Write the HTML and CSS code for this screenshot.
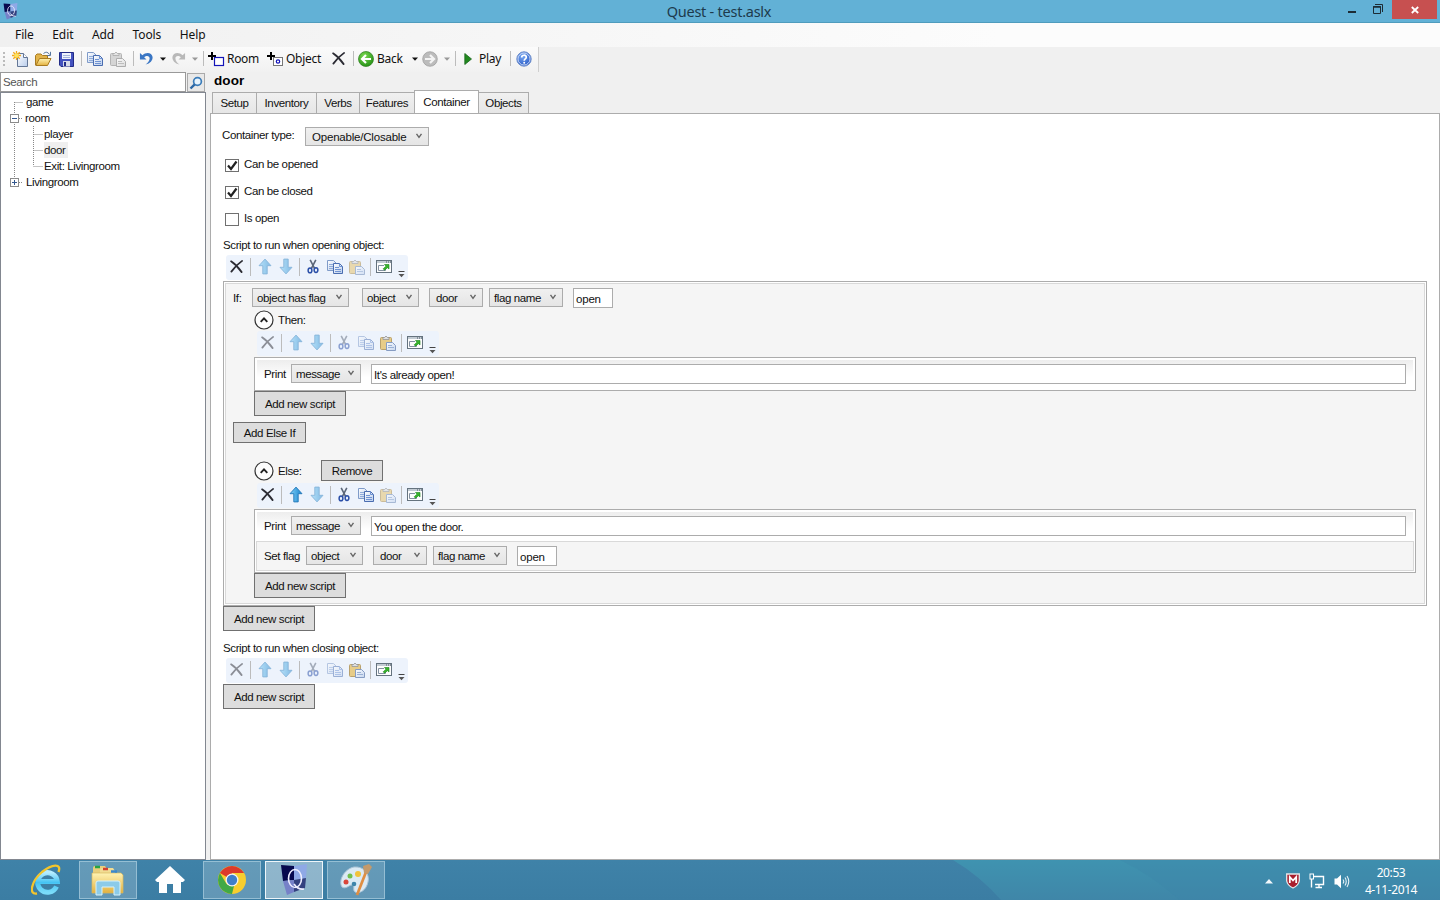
FILE: index.html
```html
<!DOCTYPE html>
<html lang="en">
<head>
  <meta charset="UTF-8">
  <title>Quest - test.aslx</title>
  <link rel="stylesheet" href="styles.css">
</head>
<body>
  <!-- shared icons -->
  <svg class="defs" width="0" height="0">
    <defs>
      <linearGradient id="gBlue" x1="0" y1="0" x2="1" y2="0"><stop offset="0" stop-color="#7fd0f8"/><stop offset="1" stop-color="#1a83cc"/></linearGradient>
      <linearGradient id="gFolder" x1="0" y1="0" x2="0" y2="1"><stop offset="0" stop-color="#fff3b4"/><stop offset="1" stop-color="#e3b13f"/></linearGradient>
      <linearGradient id="gPage" x1="0" y1="0" x2="1" y2="1"><stop offset="0" stop-color="#fff"/><stop offset="1" stop-color="#b9cdec"/></linearGradient>
      <radialGradient id="gGreen" cx=".4" cy=".3" r=".8"><stop offset="0" stop-color="#7bd950"/><stop offset="1" stop-color="#1c8a10"/></radialGradient>
      <radialGradient id="gHelp" cx=".4" cy=".3" r=".8"><stop offset="0" stop-color="#7aa9f2"/><stop offset="1" stop-color="#1c4fc0"/></radialGradient>
      <linearGradient id="gIE" x1="0" y1="0" x2="0" y2="1"><stop offset="0" stop-color="#b5ecff"/><stop offset=".5" stop-color="#46c3f3"/><stop offset="1" stop-color="#7adcfa"/></linearGradient>
    </defs>
    <symbol id="del" viewBox="0 0 16 16"><path d="M2.2 2.5C6 5 10 9 13.5 14M14 2C9.5 5 5.500 9.500 2.500 13.500" fill="none" stroke="#2b2b33" stroke-width="1.9" stroke-linecap="round"/></symbol>
    <symbol id="up" viewBox="0 0 16 16"><path d="M8 .6L14 7.200H10.200V15.400H5.800V7.200H2z" fill="url(#gBlue)" stroke="#2277b8" stroke-width=".9" stroke-linejoin="round"/></symbol>
    <symbol id="down" viewBox="0 0 16 16"><path d="M8 15.400L14 8.800H10.200V.6H5.800V8.800H2z" fill="url(#gBlue)" stroke="#2277b8" stroke-width=".9" stroke-linejoin="round"/></symbol>
    <symbol id="cut" viewBox="0 0 14 16"><path d="M4 1L8.800 10.200M10 1L5.200 10.200" stroke="#5b6678" stroke-width="1.700" fill="none"/><ellipse cx="3.800" cy="12.200" rx="2" ry="2.500" fill="none" stroke="#2a4fa8" stroke-width="1.600"/><ellipse cx="10.200" cy="11.800" rx="2" ry="2.500" fill="none" stroke="#2a4fa8" stroke-width="1.600"/></symbol>
    <symbol id="copy" viewBox="0 0 16 16"><path d="M.5 1.500H6.500L9.500 4.500V11.500H.5z" fill="url(#gPage)" stroke="#7f9bc9"/><path d="M2 5.500H6M2 7.500H6M2 9.500H6" stroke="#8fabd9"/><path d="M6.500 4.500H12.500L15.500 7.500V14.500H6.500z" fill="url(#gPage)" stroke="#4a6db0"/><path d="M12.500 4.500V7.500H15.500M8 8.500H12M8 10.500H14M8 12.500H14" stroke="#6f93d3" fill="none"/></symbol>
    <symbol id="paste" viewBox="0 0 16 16"><rect x=".5" y="2.500" width="11" height="12" rx="1" fill="#e5bf62" stroke="#a8863c"/><path d="M3 4.500V2.500H4.500Q6 -.5 7.500 2.500H9V4.500z" fill="#d9d9d9" stroke="#777" stroke-width=".8"/><path d="M6.500 7.500H12.500L15.500 10.500V15.500H6.500z" fill="url(#gPage)" stroke="#6480b0"/><path d="M8 10.500H12M8 12.500H14" stroke="#7f9cc9"/></symbol>
    <symbol id="popup" viewBox="0 0 16 16"><rect x=".5" y="1.500" width="15" height="12" fill="#fdfdfd" stroke="#65737f"/><path d="M1 3H15" stroke="#c3ccd4" stroke-width="2"/><path d="M10 3H15" stroke="#46535e" stroke-dasharray="1 1"/><path d="M8 6.500H2.500V11.500H9.500V10" fill="none" stroke="#8290a0"/><path d="M8.500 5.500H13V10L11.500 8.700L8.500 11.200L7.200 9.800L10 7.200z" fill="#39b52b" stroke="#17841a" stroke-width=".6"/></symbol>
    <symbol id="caret" viewBox="0 0 6 4"><path d="M0 .5H6L3 3.700z" fill="currentColor"/></symbol>
    <symbol id="chev" viewBox="0 0 8 6"><path d="M1.500 .8L4 4.300L6.500 .8" fill="none" stroke="#666" stroke-width="1.400"/></symbol>
    <symbol id="more" viewBox="0 0 7 7"><path d="M.5 .5H6.500" stroke="#444"/><path d="M.5 3H6.500L3.500 6.300z" fill="#555"/></symbol>
    <symbol id="fold" viewBox="0 0 20 20"><circle cx="10" cy="10" r="9" fill="#fdfdfd" stroke="#333" stroke-width="1.200"/><path d="M6.700 11.800L10 8.300L13.300 11.800" fill="none" stroke="#222" stroke-width="1.900"/></symbol>
    <symbol id="undo" viewBox="0 0 16 16"><path d="M1 2V9H8L5.500 6.700C8 4.200 11.500 5 11.300 8C11.200 10.500 9.500 12.500 7 14.500C12 13.500 14.700 10 14.500 6.500C14 1.500 7.500 .5 3.700 4.500z" fill="currentColor"/></symbol>
    <symbol id="quest" viewBox="0 0 28 32"><path d="M1 1L14 2L14 16L3 17z" fill="#07094e"/><path d="M14 2L27 0L26 14L14 16z" fill="#8fa9e6"/><path d="M3 17L14 16V28L7 31z" fill="#7681c8"/><path d="M14 16L26 14L25 24L14 28z" fill="#34417f"/><ellipse cx="15" cy="14.500" rx="6.500" ry="9" fill="none" stroke="#eef" stroke-width="1.600"/><path d="M14 20Q18 26 24 25" fill="none" stroke="#eef" stroke-width="1.600"/></symbol>
  </svg>

  <header class="titlebar">
    <svg class="app-icon" width="15" height="17"><use href="#quest"/></svg>
    <h1>Quest - test.aslx</h1>
    <div class="win-buttons">
      <svg width="60" height="19"><path d="M4 12H12" stroke="#1d2c35" stroke-width="2"/><path d="M29.500 6.500H36.500V13.500H29.500z" fill="none" stroke="#1d2c35"/><path d="M29 7H37" stroke="#1d2c35" stroke-width="1.500"/><path d="M31 4.500H38.500V12" fill="none" stroke="#1d2c35"/></svg>
      <span class="close"><svg width="8" height="8"><path d="M.8 1L7.200 7M7.200 1L.8 7" stroke="#fff" stroke-width="1.800"/></svg></span>
    </div>
  </header>

  <nav class="menubar"><span>File</span><span>Edit</span><span>Add</span><span>Tools</span><span>Help</span></nav>

  <div class="toolbar">
    <i class="grip"></i>
    <svg width="16" height="16"><path d="M5.500 2.500H11.500L15.500 6.500V15.500H5.500z" fill="url(#gPage)" stroke="#647796"/><path d="M11.500 2.500V6.500H15.500" fill="#fff" stroke="#647796"/><path d="M4.500 0V9M0 4.500H9M1.300 1.300L7.700 7.700M7.700 1.300L1.300 7.700" stroke="#f2a71b" stroke-width="1.300"/><circle cx="4.500" cy="4.500" r="2.200" fill="#ffe25a"/></svg>
    <svg width="17" height="16"><path d="M.5 14V4.500L2 3H6L7.500 4.500H12.500V8" fill="#e2b44b" stroke="#a87b21"/><path d="M.8 14.500L4.500 7.500H16L12.500 14.500z" fill="url(#gFolder)" stroke="#a87b21"/><path d="M8.500 2.500Q12 -.5 14.500 3.500M15.500 .8V4.500H12" fill="none" stroke="#56779f"/></svg>
    <svg width="15" height="16"><path d="M.5 1.500H14.500V15.500H2L.5 14z" fill="#4452bf" stroke="#222c87"/><rect x="3" y="2" width="9" height="6" fill="#eef2fc"/><path d="M4 4.500H11M4 6.500H11" stroke="#a3b3dc"/><rect x="4" y="10" width="7" height="5.500" fill="#d8dcea"/><rect x="5" y="11" width="2" height="4" fill="#222c87"/></svg>
    <i class="sep"></i>
    <svg width="16" height="16"><use href="#copy"/></svg>
    <svg class="gray" width="16" height="16"><use href="#paste"/></svg>
    <i class="sep"></i>
    <svg class="undo" width="15" height="15"><use href="#undo"/></svg>
    <svg width="6" height="4"><use href="#caret"/></svg>
    <svg class="redo" width="15" height="15"><use href="#undo"/></svg>
    <svg class="off" width="6" height="4"><use href="#caret"/></svg>
    <i class="sep"></i>
    <svg width="17" height="16"><path d="M4 1V9M0 5H8" stroke="#000" stroke-width="2"/><rect x="6.500" y="6.500" width="9" height="8" fill="#fff" stroke="#1414b8" stroke-width="1.200"/></svg>
    <span>Room</span>
    <svg width="17" height="16"><path d="M4 1V9M0 5H8" stroke="#000" stroke-width="2"/><rect x="6.500" y="6.500" width="9" height="8" fill="#fff" stroke="#777"/><circle cx="11" cy="10.500" r="1.700" fill="none" stroke="#1414b8" stroke-width="1.200"/></svg>
    <span>Object</span>
    <svg width="15" height="15"><use href="#del"/></svg>
    <i class="sep"></i>
    <svg width="16" height="16"><circle cx="8" cy="8" r="7.500" fill="url(#gGreen)" stroke="#2c7d1c" stroke-width=".7"/><path d="M13 8H4.500M8 4L4 8L8 12" fill="none" stroke="#fff" stroke-width="2.200"/></svg>
    <span>Back</span>
    <svg width="6" height="4"><use href="#caret"/></svg>
    <svg width="16" height="16"><circle cx="8" cy="8" r="7.300" fill="#bcbcbc" stroke="#999" stroke-width=".7"/><path d="M3 8H11.500M8 4L12 8L8 12" fill="none" stroke="#f4f4f4" stroke-width="2.200"/></svg>
    <svg class="off" width="6" height="4"><use href="#caret"/></svg>
    <i class="sep"></i>
    <svg width="8" height="12"><path d="M.8 .5L7.500 6L.8 11.500z" fill="#22891f" stroke="#17641a" stroke-width=".8"/></svg>
    <span>Play</span>
    <i class="sep"></i>
    <svg width="16" height="16"><circle cx="8" cy="8" r="7.200" fill="url(#gHelp)" stroke="#6f8fca"/><circle cx="8" cy="8" r="6" fill="none" stroke="#dfe9fb" stroke-width=".8"/><path d="M5.700 6.500C5.700 3.500 10.500 3.500 10.300 6.300C10.200 8 8.200 8 8.200 9.800" fill="none" stroke="#fff" stroke-width="1.700"/><circle cx="8.200" cy="11.800" r="1" fill="#fff"/></svg>
  </div>

  <main class="workspace">
    <aside class="sidebar">
      <div class="search">
        <input type="text" placeholder="Search">
        <button class="search-btn"><svg width="14" height="14"><circle cx="8.500" cy="5.500" r="3.900" fill="#e8f4fd" stroke="#3b7cb9" stroke-width="1.700"/><path d="M5.700 8.300L1.500 12.500" stroke="#2c68a6" stroke-width="2.400"/></svg></button>
      </div>
      <div class="tree">
        <div class="node"><svg width="25" height="16"><path class="dots" d="M13.500 8V16M13.500 8.500H22"/></svg><span>game</span></div>
        <div class="node"><svg width="24" height="16"><path class="dots" d="M13.500 0V16M18 8.500H22"/><rect class="box" x="9.500" y="4.500" width="8" height="8"/><path class="sign" d="M11 8.500H16"/></svg><span>room</span></div>
        <div class="node"><svg width="43" height="16"><path class="dots" d="M13.500 0V16M32.500 0V16M32.500 8.500H42"/></svg><span>player</span></div>
        <div class="node"><svg width="43" height="16"><path class="dots" d="M13.500 0V16M32.500 0V16M32.500 8.500H42"/></svg><span class="selected">door</span></div>
        <div class="node"><svg width="43" height="16"><path class="dots" d="M13.500 0V16M32.500 0V8M32.500 8.500H42"/></svg><span>Exit: Livingroom</span></div>
        <div class="node"><svg width="25" height="16"><path class="dots" d="M13.500 0V5M18 8.500H22"/><rect class="box" x="9.500" y="4.500" width="8" height="8"/><path class="sign" d="M11 8.500H16M13.500 6V11"/></svg><span>Livingroom</span></div>
      </div>
    </aside>

    <section class="editor">
      <h2>door</h2>
      <div class="tabs">
        <span class="w44">Setup</span><span class="w60">Inventory</span><span class="w43">Verbs</span><span class="w55">Features</span><span class="active">Container</span><span class="w50">Objects</span>
      </div>
      <div class="panel">
        <div class="type-row"><label>Container type:</label><div class="select w124">Openable/Closable<svg width="8" height="6"><use href="#chev"/></svg></div></div>
        <div class="check"><i><svg width="12" height="12"><path d="M2 5.500L5 9L10.500 1.500" fill="none" stroke="#222" stroke-width="2.200"/></svg></i><label>Can be opened</label></div>
        <div class="check"><i><svg width="12" height="12"><path d="M2 5.500L5 9L10.500 1.500" fill="none" stroke="#222" stroke-width="2.200"/></svg></i><label>Can be closed</label></div>
        <div class="check"><i></i><label>Is open</label></div>

        <p class="caption">Script to run when opening object:</p>
        <div class="script-bar">
          <svg width="15" height="15"><use href="#del"/></svg><i class="sep"></i>
          <svg class="dim" width="16" height="17"><use href="#up"/></svg><svg class="dim" width="16" height="17"><use href="#down"/></svg><i class="sep"></i>
          <svg width="14" height="15"><use href="#cut"/></svg><svg width="16" height="16"><use href="#copy"/></svg><svg class="dim" width="16" height="16"><use href="#paste"/></svg><i class="sep"></i>
          <svg width="16" height="16"><use href="#popup"/></svg><svg class="more" width="7" height="7"><use href="#more"/></svg>
        </div>

        <div class="if-frame">
          <div class="if-block">
            <div class="fields">
              <label class="if-label">If:</label>
              <div class="select w97">object has flag<svg width="8" height="6"><use href="#chev"/></svg></div>
              <div class="select w57">object<svg width="8" height="6"><use href="#chev"/></svg></div>
              <div class="select w54">door<svg width="8" height="6"><use href="#chev"/></svg></div>
              <div class="select w74">flag name<svg width="8" height="6"><use href="#chev"/></svg></div>
              <input class="flag" type="text" value="open">
            </div>
            <div class="branch">
              <div class="branch-head"><svg width="20" height="20"><use href="#fold"/></svg><label>Then:</label></div>
              <div class="script-bar">
                <svg class="dim" width="15" height="15"><use href="#del"/></svg><i class="sep"></i>
                <svg class="dim" width="16" height="17"><use href="#up"/></svg><svg class="dim" width="16" height="17"><use href="#down"/></svg><i class="sep"></i>
                <svg class="dim" width="14" height="15"><use href="#cut"/></svg><svg class="dim" width="16" height="16"><use href="#copy"/></svg><svg class="soft" width="16" height="16"><use href="#paste"/></svg><i class="sep"></i>
                <svg width="16" height="16"><use href="#popup"/></svg><svg class="more" width="7" height="7"><use href="#more"/></svg>
              </div>
              <div class="script-list">
                <div class="print"><label>Print</label><div class="select w70">message<svg width="8" height="6"><use href="#chev"/></svg></div><input type="text" value="It's already open!"></div>
              </div>
              <button class="add">Add new script</button>
            </div>
            <button class="else-if">Add Else If</button>
            <div class="branch else">
              <div class="branch-head"><svg width="20" height="20"><use href="#fold"/></svg><label>Else:</label><button class="remove">Remove</button></div>
              <div class="script-bar">
                <svg width="15" height="15"><use href="#del"/></svg><i class="sep"></i>
                <svg width="16" height="17"><use href="#up"/></svg><svg class="dim" width="16" height="17"><use href="#down"/></svg><i class="sep"></i>
                <svg width="14" height="15"><use href="#cut"/></svg><svg width="16" height="16"><use href="#copy"/></svg><svg class="dim" width="16" height="16"><use href="#paste"/></svg><i class="sep"></i>
                <svg width="16" height="16"><use href="#popup"/></svg><svg class="more" width="7" height="7"><use href="#more"/></svg>
              </div>
              <div class="script-list">
                <div class="print"><label>Print</label><div class="select w70">message<svg width="8" height="6"><use href="#chev"/></svg></div><input type="text" value="You open the door."></div>
                <div class="fields set-flag">
                  <label>Set flag</label>
                  <div class="select w57">object<svg width="8" height="6"><use href="#chev"/></svg></div>
                  <div class="select w54">door<svg width="8" height="6"><use href="#chev"/></svg></div>
                  <div class="select w74">flag name<svg width="8" height="6"><use href="#chev"/></svg></div>
                  <input class="flag" type="text" value="open">
                </div>
              </div>
              <button class="add">Add new script</button>
            </div>
          </div>
        </div>
        <button class="add">Add new script</button>

        <p class="caption closing">Script to run when closing object:</p>
        <div class="script-bar">
          <svg class="dim" width="15" height="15"><use href="#del"/></svg><i class="sep"></i>
          <svg class="dim" width="16" height="17"><use href="#up"/></svg><svg class="dim" width="16" height="17"><use href="#down"/></svg><i class="sep"></i>
          <svg class="dim" width="14" height="15"><use href="#cut"/></svg><svg class="dim" width="16" height="16"><use href="#copy"/></svg><svg class="soft" width="16" height="16"><use href="#paste"/></svg><i class="sep"></i>
          <svg width="16" height="16"><use href="#popup"/></svg><svg class="more" width="7" height="7"><use href="#more"/></svg>
        </div>
        <button class="add last">Add new script</button>
      </div>
    </section>
  </main>

  <footer class="taskbar">
    <svg class="wave" width="500" height="40"><defs><linearGradient id="gWave" x1="0" y1="0" x2="0" y2="1"><stop offset="0" stop-color="#3f93b0"/><stop offset="1" stop-color="#3f86a8"/></linearGradient></defs><path d="M13 0Q40 16 61 40H500V0z" fill="url(#gWave)"/><path d="M180 0Q210 14 240 40H500V0z" fill="#3d86a8" opacity=".3"/></svg>
    <div class="apps">
      <span class="app"><svg width="30" height="32"><path d="M25.500 22.500A9.800 9.800 0 1 1 26.300 17.500H9" fill="none" stroke="url(#gIE)" stroke-width="5"/><path d="M6 29.500C-3 31 .5 17 11 8C21 0 31 -1 27.500 8" fill="none" stroke="#f3c52c" stroke-width="2.300"/></svg></span>
      <span class="app open"><svg width="34" height="32"><path d="M2 26V4Q2 2 4 2H14L16 5V26z" fill="#e8cf7d"/><path d="M9 27V6Q9 4 11 4H22L24 7V27z" fill="#f1dc92"/><path d="M1 29V9H30L32 11V29z" fill="url(#gFolder)" stroke="#d9b95e" stroke-width=".7"/><path d="M4 3H9" stroke="#26a343" stroke-width="2.500"/><path d="M12 5H17" stroke="#d33f2f" stroke-width="2.500"/><path d="M20 7.500H26" stroke="#3b88cc" stroke-width="2.500"/><path d="M5 31V19Q5 17 7 17H27Q29 17 29 19V31H23V23H11V31z" fill="#8ccbe9" stroke="#d6f2fc"/></svg></span>
      <span class="app"><svg width="30" height="28"><path d="M15 0L30 14L28 16H26V27H18V18H12V27H4V16H2L0 14z" fill="#fff"/></svg></span>
      <span class="app open"><svg width="30" height="30"><circle cx="15" cy="15" r="14" fill="#f8ce2e"/><path d="M15 15L2.900 8A14 14 0 0 1 27.100 8H15z" fill="#dc3a2b"/><path d="M15 29A14 14 0 0 1 2.900 8L9.500 19L17 21z" fill="#42a945"/><circle cx="15" cy="15" r="6.500" fill="#f4f4f4"/><circle cx="15" cy="15" r="5.200" fill="#3f7fca"/></svg></span>
      <span class="app open current"><svg width="28" height="32"><use href="#quest"/></svg></span>
      <span class="app open"><svg width="32" height="32"><path d="M14 3C24 2 30 10 28 18C26 27 19 30 15 28C12 26 16 21 11 21C7 23 5 25 2 23C-2 17 4 5 14 3z" fill="#dceaf4" stroke="#a9c3d6"/><circle cx="6" cy="18" r="2.500" fill="#d9453a"/><circle cx="10" cy="12" r="2.500" fill="#72bf4d"/><circle cx="18" cy="10" r="3" fill="#f1c33b"/><circle cx="14" cy="20" r="2.300" fill="#3e85ab"/><path d="M26 8L17 31" stroke="#df8e42" stroke-width="2.700"/><path d="M24 9L23 2L29 0L32 3L28 10z" fill="#c49a6b"/></svg></span>
    </div>
    <div class="tray">
      <svg width="8" height="5"><path d="M4 0L8 4.500H0z" fill="#f2f8fb"/></svg>
      <svg width="14" height="16"><path d="M.7 1H13.300V8Q12.500 12.500 7 15Q1.500 12.500 .7 8z" fill="#a91e2d" stroke="#e4e8ea" stroke-width="1.300"/><path d="M3.800 10V4L7 7.500L10.200 4V10" fill="none" stroke="#fff" stroke-width="1.800"/></svg>
      <svg width="16" height="16"><path d="M5 3.500H14.500V11.500H6M10 12V14.500M6.500 14.500H13M2.500 5V14.500" fill="none" stroke="#fff" stroke-width="1.400"/><rect x="1" y="1" width="3.500" height="5" fill="#3e88aa" stroke="#fff"/></svg>
      <svg width="16" height="15"><path d="M.5 4.500H3L7 .8V14.200L3 10.500H.5z" fill="#fff"/><path d="M9 5.500Q10.500 7.500 9 9.500M11 3.500Q13.500 7.500 11 11.500M13 2Q16.500 7.500 13 13" fill="none" stroke="#e6f1f6" stroke-width="1.100"/></svg>
      <div class="clock"><span class="time">20:53</span><span>4-11-2014</span></div>
    </div>
  </footer>
</body>
</html>
```
FILE: styles.css
```css
* {
  box-sizing: border-box;
}
body {
  margin: 0;
  width: 1440px;
  height: 900px;
  overflow: hidden;
  display: flex;
  flex-direction: column;
  background: #f0f0f0;
  color: #111;
  font-family: "Liberation Sans", Arial, sans-serif;
  font-size: 11.5px;
  letter-spacing: -0.38px;
}
svg {
  display: block;
  flex: none;
}
.defs {
  position: absolute;
}
h1, h2, p {
  margin: 0;
}
button, input {
  font: inherit;
  letter-spacing: inherit;
  color: inherit;
  border-radius: 0;
  margin: 0;
}

/* window chrome */
.titlebar {
  height: 23px;
  display: grid;
  grid-template-columns: 110px 1fr 110px;
  background: #62b1d6;
  border-bottom: 1px solid #4f9cbd;
}
.app-icon {
  margin: 3px 0 0 3px;
}
.titlebar h1 {
  text-align: center;
  font: 14.5px/23px "Noto Sans", sans-serif;
  letter-spacing: -0.25px;
  color: #1d3a4c;
  padding-right: 2px;
}
.win-buttons {
  display: flex;
  justify-content: flex-end;
  padding-right: 3px;
}
.win-buttons > svg {
  margin-right: -12px;
}
.close {
  width: 45px;
  height: 19px;
  background: #c75050;
  display: flex;
  align-items: center;
  justify-content: center;
}
.menubar {
  height: 24px;
  display: flex;
  gap: 18.500px;
  padding-left: 15px;
  background: linear-gradient(to right, #f0f0f0, #fcfcfc 1000px);
  font: 12px/24px "Noto Sans", sans-serif;
  letter-spacing: -0.1px;
}
.toolbar {
  height: 25px;
  width: 539px;
  display: grid;
  grid-template-columns: 12px 23px 24px 22px 6px 23px 23px 6px 21px 11px 21px 11px 5px 19px 40px 19px 45px 22px 5px 19px 35px 10px 22px 11px 9px 15px 31px 6px 16px;
  align-items: center;
  padding-bottom: 2px;
  background: linear-gradient(to bottom, #fbfbfb, #f1f1f1);
  border-right: 1px solid #cfcfcf;
  font: 12px/22px "Noto Sans", sans-serif;
  letter-spacing: -0.3px;
}
.grip {
  width: 2px;
  height: 14px;
  margin-left: 3px;
  background: repeating-linear-gradient(to bottom, #bbb 0 2px, transparent 2px 4px);
}
.sep {
  width: 1px;
  height: 15px;
  background: #bcbcbc;
}
.gray {
  filter: grayscale(1);
  opacity: 0.6;
}
.undo {
  color: #3a76c4;
}
.redo {
  color: #b9b9b9;
  transform: scaleX(-1);
}
.off {
  color: #999;
}

.workspace {
  height: 788px;
  display: flex;
}
.sidebar {
  width: 206px;
  display: flex;
  flex-direction: column;
  margin-right: 4px;
}
.search {
  height: 20px;
  display: flex;
  gap: 1px;
}
.search input {
  width: 186px;
  height: 20px;
  padding: 0 2px;
  border: 1px solid #999;
}
.search input::placeholder {
  color: #555;
}
.search-btn {
  width: 18px;
  height: 19px;
  padding: 1px;
  margin-top: 1px;
  background: #e8e8e8;
  border: 1px solid #aaa;
}
.tree {
  flex: 1;
  background: #fff;
  border: 1px solid #828790;
  padding-top: 1px;
}
.node {
  height: 16px;
  display: flex;
  line-height: 16px;
}
.node .selected {
  background: #efefef;
  padding-right: 2px;
}
.dots {
  stroke: #888;
  stroke-dasharray: 1 1;
  fill: none;
}
.box {
  fill: #fff;
  stroke: #8b8b8b;
}
.sign {
  stroke: #34588f;
}

/* object editor */
.editor {
  flex: 1;
  display: flex;
  flex-direction: column;
}
h2 {
  height: 18px;
  padding-left: 4px;
  font-size: 13.5px;
  line-height: 17px;
  letter-spacing: 0.1px;
  color: #000;
}
.tabs {
  height: 23px;
  display: flex;
  align-items: flex-end;
  padding-left: 2px;
}
.tabs span {
  height: 21px;
  border: 1px solid #acacac;
  border-bottom: 0;
  border-right: 0;
  background: linear-gradient(to bottom, #f0f0f0, #e6e6e6);
  text-align: center;
  line-height: 20px;
}
.tabs .active {
  width: 65px;
  height: 24px;
  margin-bottom: -1px;
  border-right: 1px solid #acacac;
  background: #fff;
  line-height: 22px;
}
.tabs span:last-child {
  border-right: 1px solid #acacac;
  border-left: 0;
}
.w43 { width: 43px; }
.w44 { width: 44px; }
.w50 { width: 50px; }
.w54 { width: 54px; }
.w55 { width: 55px; }
.w57 { width: 57px; }
.w60 { width: 60px; }
.w70 { width: 70px; }
.w74 { width: 74px; }
.w97 { width: 97px; }
.w124 { width: 124px; }
.panel {
  flex: 1;
  background: #fff;
  border: 1px solid #acacac;
  padding: 13px 12px 0;
}
.type-row {
  height: 27px;
  display: flex;
  align-items: flex-start;
}
.type-row label {
  width: 82px;
  line-height: 17px;
  margin-left: -1px;
  margin-right: 1px;
}
.select {
  height: 19px;
  display: flex;
  justify-content: space-between;
  padding: 0 5px 0 4px;
  border: 1px solid #acacac;
  background: linear-gradient(to bottom, #f0f0f0, #e5e5e5);
  line-height: 18px;
  white-space: nowrap;
}
.select svg {
  margin-top: 5px;
}
.select.w124 {
  padding-left: 6px;
  letter-spacing: -0.2px;
}
.check {
  height: 27px;
  display: flex;
  gap: 5px;
  padding-left: 2px;
}
.check i {
  width: 14px;
  height: 13px;
  margin-top: 5px;
  border: 1px solid #707070;
}
.check label {
  line-height: 21px;
}
.caption {
  height: 20px;
  line-height: 20px;
}
.script-bar {
  width: 182px;
  height: 25px;
  margin-left: 3px;
  padding-bottom: 2px;
  display: grid;
  grid-template-columns: 21px 7px 21px 21px 7px 20px 23px 22px 5px 22px 13px;
  align-items: center;
  justify-items: center;
  background: #edf3fc;
  border-radius: 3px;
}
.script-bar .sep {
  height: 18px;
}
.script-bar .more {
  margin-top: 15px;
}
.dim {
  opacity: 0.5;
}
.soft {
  opacity: 0.75;
}
.if-frame {
  width: 1204px;
  height: 325px;
  border: 1px solid #acacac;
  padding: 1px;
  margin-top: 1px;
}
.if-block {
  height: 321px;
  border: 1px solid #d9d9d9;
  background: #f5f5f5;
  padding: 4px 7px 0;
}
.fields {
  display: flex;
}
.fields label,
.print label {
  line-height: 20px;
  height: 19px;
}
.fields .if-label {
  width: 19px;
}
.fields .w57 {
  margin-right: 10px;
}
.fields .w54 {
  margin-right: 6px;
}
.fields .w97 {
  margin-right: 13px;
}
.fields .w54 {
  padding-left: 6px;
}
.fields .w74 {
  padding-left: 4px;
  margin-right: 10px;
}
.flag {
  width: 40px;
  height: 20px;
  padding: 1px 2px 0;
  border: 1px solid #acacac;
  letter-spacing: -0.2px;
}
.branch {
  margin-left: 21px;
}
.branch-head {
  height: 23px;
  display: flex;
  gap: 4px;
  padding-top: 2px;
}
.branch-head label {
  line-height: 20px;
}
.else .branch-head {
  padding-top: 1px;
}
.else .branch-head label {
  width: 23px;
}
.script-list {
  width: 1162px;
  margin-top: 1px;
  border: 1px solid #acacac;
  padding: 1px;
  background: #fff;
}
.print {
  height: 30px;
  display: flex;
  margin: 0 1px;
  padding: 4px 7px 0;
  border-top: 1px solid #fff;
  background: linear-gradient(to bottom, #ededed, #fff 60%);
}
.print label {
  width: 26px;
  margin-right: 1px;
}
.print .select {
  margin-right: 10px;
}
.print input {
  flex: 1;
  height: 20px;
  padding: 2px 2px 0;
  border: 1px solid #acacac;
  background: #fff;
}
.set-flag {
  height: 30px;
  padding: 4px 7px 0;
  border: 1px solid #d9d9d9;
  background: #f5f5f5;
}
.set-flag label {
  width: 42px;
}
.add, .else-if, .remove {
  display: block;
  background: #ddd;
  border: 1px solid #707070;
  padding: 0;
}
.add {
  width: 92px;
  height: 25px;
}
.else-if {
  width: 73px;
  height: 21px;
  margin: 6px 0 17px;
}
.remove {
  width: 62px;
  height: 21px;
  margin: -1px 0 0 16px;
}
.closing {
  margin-top: 7px;
}
.last {
  margin-top: 1px;
}

/* taskbar */
.taskbar {
  position: relative;
  height: 40px;
  display: flex;
  justify-content: space-between;
  background: linear-gradient(to bottom, #3f82a8, #3b7da3);
}
.wave {
  position: absolute;
  left: 940px;
  top: 0;
}
.apps {
  display: flex;
  gap: 4px;
  padding: 1px 0 1px 17px;
}
.app {
  width: 58px;
  display: flex;
  align-items: center;
  justify-content: center;
}
.open {
  background: rgba(255, 255, 255, 0.2);
  border: 1px solid rgba(190, 220, 235, 0.55);
}
.current {
  background: rgba(255, 255, 255, 0.42);
  border-color: #eef6fa;
}
.tray {
  position: relative;
  display: flex;
  align-items: center;
  gap: 9px;
  padding: 2px 21px 0 0;
}
.tray > svg:first-child {
  margin-right: 4px;
}
.clock {
  display: flex;
  flex-direction: column;
  align-items: center;
  width: 56px;
  margin-left: 4px;
  font: 12px/17px "Noto Sans", sans-serif;
  letter-spacing: -0.4px;
  color: #fff;
}
```
